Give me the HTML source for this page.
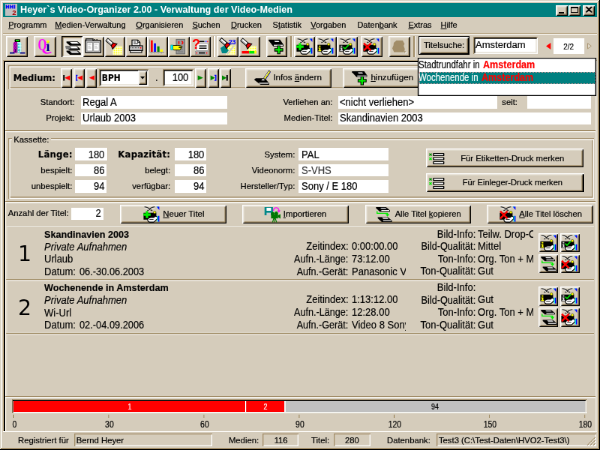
<!DOCTYPE html>
<html><head><meta charset="utf-8"><title>Heyer`s Video-Organizer 2.00</title>
<style>
html,body{margin:0;padding:0;background:#D5CCBB;overflow:hidden;}
body{width:600px;height:450px;position:relative;font-family:"Liberation Sans",sans-serif;color:#000;}
#win{position:absolute;left:0;top:0;width:800px;height:600px;transform:scale(.75);transform-origin:0 0;overflow:hidden;will-change:transform;}
.a{position:absolute;box-sizing:border-box;}
.t{white-space:nowrap;height:0;line-height:0;}
.t span{display:inline-block;line-height:0;vertical-align:baseline;}
.f11{font-size:11.3px;}
.f13{font-size:14px;}
.mn{font-size:11px;}
.b{font-weight:bold;}
.i{font-style:italic;}
u{text-decoration:underline;}
.btn{background:#D5CCBB;box-shadow:inset 1.333px 1.333px 0 #fff,inset -1.333px -1.333px 0 #000,inset 2.667px 2.667px 0 #E4DED2,inset -2.667px -2.667px 0 #A28D68;}
.btnp{background:#E9E4DA;box-shadow:inset 1.333px 1.333px 0 #000,inset -1.333px -1.333px 0 #fff,inset 2.667px 2.667px 0 #A28D68,inset -2.667px -2.667px 0 #E4DED2;}
.sunk{background:#fff;box-shadow:inset 1.333px 1.333px 0 #A28D68,inset -1.333px -1.333px 0 #fff,inset 2.667px 2.667px 0 #000,inset -2.667px -2.667px 0 #E4DED2;}
.sunk1{box-shadow:inset 1.333px 1.333px 0 #A28D68,inset -1.333px -1.333px 0 #fff;}
.etch{box-shadow:inset 1.333px 1.333px 0 #A28D68,inset -1.333px -1.333px 0 #fff,inset 2.667px 2.667px 0 #fff,inset -2.667px -2.667px 0 #A28D68;}
.w{background:#fff;}
svg.ic{position:absolute;overflow:visible;}
.ttl{font-size:12.65px;font-weight:bold;color:#fff;}
.big{font-size:28px;}
.f10{font-size:10.5px;}
.f11,.mn,.f10{-webkit-text-stroke:.22px currentColor;}
.f13{-webkit-text-stroke:.18px currentColor;}

</style></head><body>
<svg width="0" height="0" style="position:absolute">
<defs>
<pattern id="ygrid" width="3" height="3" patternUnits="userSpaceOnUse"><rect width="3" height="3" fill="#fff"/><rect x=".5" y=".5" width="1.9" height="1.9" fill="#FF0"/></pattern>
<pattern id="hat1" width="2" height="2" patternUnits="userSpaceOnUse"><rect width="2" height="2" fill="#C0C"/><rect width="1" height="1" fill="#808"/><rect x="1" y="1" width="1" height="1" fill="#808"/></pattern>
<pattern id="hat2" width="2" height="2" patternUnits="userSpaceOnUse"><rect width="2" height="2" fill="#CFF"/><rect width="1" height="1" fill="#0CC"/></pattern>

<symbol id="t1" overflow="visible"><rect x="7.6" y="1.2" width="7.4" height="4" rx="1" fill="#000"/><rect x="9" y="2.2" width="4.6" height="1.8" fill="#0F0"/><path d="M5.8 19.4V7C5.8 5.6 6.6 5 8 5H11V19.4Z" fill="url(#hat1)"/><path d="M11 5H14C15.4 5 16.2 5.6 16.2 7V19.4H11Z" fill="url(#hat2)"/><path d="M11 6.5V19.4" stroke="#668" stroke-width="1.2"/><path d="M8.6 14V19" stroke="#406" stroke-width="1.2"/><path d="M13.6 14V19" stroke="#9aa" stroke-width="1.2"/><path d="M1 19.6H7.4M14.8 19.6H21.4" stroke="#008" stroke-width="1.6" fill="none"/></symbol>


<symbol id="cas" overflow="visible"><path d="M0 0H15L19.2 3.6V5.4H4.6L0 1.6Z" fill="#000"/><path d="M4.6 .7H14.4L16.8 3H7.2Z" fill="#fff"/></symbol>
<symbol id="t3" overflow="visible"><use href="#cas" x="1.6" y="4.3"/><use href="#cas" x=".6" y="10.4"/><use href="#cas" x="1.6" y="16.5"/><path d="M0 10.6H6L8 12.5L6 14.6H1Z" fill="#777"/></symbol>

<symbol id="t4" overflow="visible"><rect x="-.2" y="3.2" width="20.6" height="15.8" fill="#D4D4D4" stroke="#000" stroke-width="1.3"/><path d="M.6 3V.9H10V3" fill="#ddd" stroke="#000" stroke-width="1.2"/><path d="M11.5 1.6h1.5M14.5 1.6h1.5" stroke="#000" stroke-width="1"/><rect x="2" y="5.4" width="7.4" height="11.6" fill="#fff" stroke="#777" stroke-width=".7"/><rect x="10.8" y="5.4" width="7.4" height="11.6" fill="#fff" stroke="#777" stroke-width=".7"/><path d="M3.5 8h4M3.5 10.5h3M3.5 13h4M12.3 8h4M12.3 10.5h3M12.3 13h4" stroke="#aaa" stroke-width=".9"/></symbol>

<symbol id="flash" overflow="visible"><g transform="translate(1.2,2.4) rotate(41)"><rect x="-1" y="-2.2" width="9.5" height="4.4" fill="#fff" stroke="#000" stroke-width="1"/><path d="M-1 1H8.5" stroke="#999" stroke-width="1.2"/><path d="M8.5 -2.2L13 -4.4V4.4L8.5 2.2Z" fill="#E00" stroke="#000" stroke-width="1"/></g></symbol>
<symbol id="t5" overflow="visible"><rect x="8.5" y="10.6" width="12.6" height="11.5" fill="url(#ygrid)"/><path d="M8.5 22.1V16L14 10.6H8.5Z" fill="#D5CCBB"/><use href="#flash"/></symbol>

<symbol id="t6" overflow="visible"><path d="M5 10V2.4H12.5L15.6 5.5V10Z" fill="#fff" stroke="#000" stroke-width="1.2"/><path d="M12.3 2.6V5.7H15.4M7 5h3M7 7.3h6" stroke="#000" stroke-width=".9" fill="none"/><rect x="1.5" y="10" width="17.6" height="6.4" fill="#C8C8C8" stroke="#000" stroke-width="1.2"/><path d="M3 12.7H15" stroke="#555" stroke-width="1.2" stroke-dasharray="1 1"/><rect x="15.6" y="12" width="1.8" height="1.6" fill="#F00"/><rect x="2.6" y="16.4" width="15.4" height="2.6" fill="#eee" stroke="#000" stroke-width="1.1"/></symbol>

<symbol id="t7" overflow="visible"><path d="M.6 1.5V18.6H20" stroke="#888" stroke-width="1" fill="none"/><path d="M3 19.4v1M7.5 19.4v1M12 19.4v1M16.3 19.4v1" stroke="#888" stroke-width="1"/><rect x="2" y="2.8" width="2.7" height="15.2" fill="#F00"/><rect x="6.2" y="6.8" width="2.7" height="11.2" fill="#00F"/><rect x="10.6" y="10.8" width="3" height="7.2" fill="#080"/><rect x="14.6" y="14.8" width="3.3" height="3.2" fill="#FF0"/></symbol>

<symbol id="t8" overflow="visible"><rect x="7" y="1.4" width="11.4" height="19.4" fill="#999" stroke="#666" stroke-width="1"/><path d="M10.5 4V7.8M14 4.2C16.3 4 16.3 7.8 14 7.6" stroke="#F00" stroke-width="1.5" fill="none"/><path d="M9 15h7M9 18h7" stroke="#777" stroke-width="1"/><path d="M2.5 9.5H8C10 9 15 10.3 15 11.3C15 12.3 12 12 10.5 12.2H14C14.5 13.2 13.5 14 12.5 14C13 15 12 15.8 11 15.7H4L2.5 15Z" fill="#FF0" stroke="#000" stroke-width=".9"/><rect x="-.2" y="9" width="2.7" height="6.6" fill="#0FF" stroke="#088" stroke-width=".6"/></symbol>



<symbol id="t11" overflow="visible"><rect x="9" y="10.4" width="12" height="7" fill="url(#ygrid)"/><path d="M9 17.4V14L12.5 10.4H9Z" fill="#D5CCBB"/><rect x="1.5" y="17" width="9.8" height="3.4" fill="#F00"/><rect x="11.3" y="17" width="7" height="3.4" fill="#0E0"/><rect x="18.3" y="17" width="2.7" height="3.4" fill="#FF0"/><use href="#flash" x=".8"/></symbol>

<symbol id="plus" overflow="visible"><path d="M-1.7 -5.4H1.7V-1.7H5.4V1.7H1.7V5.4H-1.7V1.7H-5.4V-1.7H-1.7Z" fill="#0E0" stroke="#000" stroke-width="1.1"/></symbol>
<symbol id="t12" overflow="visible"><path d="M.3 1.7H15.3L20 8.4V11H6.5L.3 3.3Z" fill="#000"/><path d="M7.6 3.4H13.4L14.5 5H8.8Z" fill="#fff"/><path d="M7 9.3H19" stroke="#fff" stroke-width="1.3"/><use href="#plus" x="13.7" y="15.4"/></symbol>
<symbol id="casplus" overflow="visible"><path d="M-.7 2H15.6L19.4 7.6V9.8H5.3L-.7 3.2Z" fill="#000"/><path d="M7.2 3.4H13L14 4.9H8.2Z" fill="#fff"/><path d="M6.3 8.3H18.8" stroke="#fff" stroke-width="1.2"/><use href="#plus" x="12.8" y="14.6"/></symbol>

<symbol id="hbase" overflow="visible"><path d="M.6 .9C4 .9 6 2.4 7.6 4C9.4 2 11.6 .9 14.4 .9M4.4 5.8C5.8 5.2 6.8 4.6 7.6 4C8.8 4.6 9.8 5.4 11.2 5.8" stroke="#222" stroke-width="1.4" fill="none"/><path d="M.6 2.1C3.6 2.1 5.6 3.4 7 4.8M8.4 4.6C10 3 12 2.1 14.4 2.1" stroke="#fff" stroke-width=".9" fill="none"/><path d="M16.6 .6H20.4V5Z" fill="#00F"/><path d="M16.6 .6H18.4V1.9Z" fill="#0FF"/><rect x="-.6" y="8.7" width="17" height="9.1" fill="#000"/><circle cx="14.2" cy="8.1" r="1.7" fill="#FF0" stroke="#330" stroke-width=".6"/><path d="M4.8 17.8C5.5 15.6 8 14.7 10.5 14.9H13.2C14.4 13.4 16.4 13.2 17.6 13.9V17.4C16 17.8 15 20 13 21.1H7.5C5.6 20.9 4.9 19.6 4.8 17.8Z" fill="#fff" stroke="#000" stroke-width="1.1"/><path d="M7.2 17.6H12.6" stroke="#000" stroke-width=".9"/><rect x="17.6" y="12.8" width="1.3" height="7.8" fill="#0FF"/><rect x="18.9" y="12.8" width="1.5" height="7.8" fill="#00F"/></symbol>
<symbol id="hplus" overflow="visible"><use href="#hbase"/><path d="M2.4 6.6H5.6V9.6H8.8V12.8H5.6V15.8H2.4V12.8H-.8V9.6H2.4Z" fill="#0E0"/></symbol>
<symbol id="hi" overflow="visible"><use href="#hbase"/><path d="M1.2 9.8H3.4V11.4H1.2ZM.5 12.4H3.4V16H4.3V17.2H.5V16H1.4V13.6H.5Z" fill="#FF0"/></symbol>
<symbol id="hchk" overflow="visible"><use href="#hbase"/><path d="M1.2 9.8H3.4V11.4H1.2ZM.5 12.4H3.4V16H4.3V17.2H.5V16H1.4V13.6H.5Z" fill="#ddd"/><path d="M4.6 11.6L7 14L12 8.6" stroke="#0D0" stroke-width="1.7" fill="none"/></symbol>
<symbol id="hx" overflow="visible"><use href="#hbase"/><path d="M0 6.6L9.6 16.4M9.6 6.6L0 16.4" stroke="#F00" stroke-width="2.4"/></symbol>
<symbol id="t13" overflow="visible"><use href="#hplus"/></symbol>
<symbol id="t14" overflow="visible"><use href="#hi"/></symbol>
<symbol id="t15" overflow="visible"><use href="#hchk"/></symbol>
<symbol id="t16" overflow="visible"><use href="#hx"/></symbol>
<symbol id="t17" overflow="visible"><path d="M18 17L20.6 18.6L18 20.4Z" fill="#fff"/><path d="M6.5 3H15L17.4 7.4L16.2 10L17.8 14.6L16.4 18.4H3.4L1 13.4L2.6 9.4L3 6Z" fill="#A28D68"/><path d="M17.2 16.4L19.8 18L17.2 19.6Z" fill="#A28D68"/></symbol>

<symbol id="n1" overflow="visible"><rect x="1.2" y="2" width="2" height="7.6" fill="#000"/><path d="M10.2 2.4V9.2L3.2 5.8Z" fill="#F00"/></symbol>
<symbol id="n2" overflow="visible"><path d="M3.4 2.5H1.8V9.1H3.4" stroke="#00F" stroke-width="1.4" fill="none"/><path d="M10 2.4V9.2L3.2 5.8Z" fill="#F00"/></symbol>
<symbol id="n3" overflow="visible"><path d="M8.8 2.6V9L1.8 5.8Z" fill="#F00"/></symbol>
<symbol id="n4" overflow="visible"><path d="M1.6 2.6V9L8.8 5.8Z" fill="#080"/></symbol>
<symbol id="n5" overflow="visible"><path d="M7 2.5H8.8V9.1H7" stroke="#00F" stroke-width="1.4" fill="none"/><path d="M1.6 2.4V9.2L7.6 5.8Z" fill="#080"/></symbol>
<symbol id="n6" overflow="visible"><rect x="6.8" y="2" width="2" height="7.6" fill="#000"/><path d="M1 2.4V9.2L7 5.8Z" fill="#080"/></symbol>

<symbol id="pen" overflow="visible"><path d="M-.2 13.2L2 11.2H14L20 18V20H8.5Z" fill="#000"/><path d="M6.5 18H19.3" stroke="#fff" stroke-width="1.3"/><path d="M9.4 14.4C9.6 12.6 11 11.6 12.2 11.4L14.4 13.4C14 14.6 11.6 15.4 9.4 14.4Z" fill="#ccc" stroke="#000" stroke-width=".7"/><path d="M12 11.6L19.6 .6L21.8 2.4L14.4 13.4Z" fill="#000"/><path d="M13.2 11.4L19.8 1.8" stroke="#fff" stroke-width="1"/><path d="M14 12L20.6 2.4" stroke="#FF0" stroke-width="1.5"/><path d="M15 12.8L21.4 3.4" stroke="#00A" stroke-width=".9"/></symbol>

<symbol id="lst" overflow="visible"><path d="M.4 .6L3.6 3.6M3.6 .6L.4 3.6" stroke="#080" stroke-width="1.3"/><path d="M.4 6.2L3.6 9.2M3.6 6.2L.4 9.2" stroke="#0E0" stroke-width="1.3"/><rect x="5.2" y="0.1" width="15.2" height="4" rx=".9" fill="#000"/><rect x="6.6" y="1.25" width="12.4" height="1.7" fill="#fff"/><rect x="5.2" y="5.5" width="15.2" height="4" rx=".9" fill="#000"/><rect x="6.6" y="6.65" width="12.4" height="1.7" fill="#fff"/><rect x="5.2" y="10.9" width="15.2" height="4" rx=".9" fill="#000"/><rect x="6.6" y="12.05" width="12.4" height="1.7" fill="#fff"/></symbol>

<symbol id="imp" overflow="visible"><rect x="-.3" y="1" width="11.2" height="11" fill="#088"/><rect x="2.4" y="2" width="6" height="4" fill="#fff"/><rect x="2.4" y="8.6" width="5.6" height="3.4" fill="#ccc"/><path d="M11.5 6C12 .5 18.5 .5 19 6" stroke="#F0F" stroke-width="1.2" fill="none"/><path d="M16.6 5.4H21L18.8 8.4Z" fill="#F0F"/><circle cx="10.6" cy="9.6" r="2.2" fill="#070"/><circle cx="15.4" cy="9.4" r="2.4" fill="#070"/><rect x="8.4" y="10.6" width="9.4" height="5.6" fill="#070"/><path d="M17.8 12L21 10.4V16.4L17.8 14.8Z" fill="#070"/><path d="M12 16L10.4 21.4M13 16V21.4M14 16L15.8 21.4" stroke="#070" stroke-width="1.1"/></symbol>

<symbol id="copy" overflow="visible"><path d="M.3 1H13.6L19 5.4V7.2H5.4L.3 2.6Z" fill="#000"/><path d="M6 1.9H13L14.6 3.3H7.6Z" fill="#fff"/><path d="M7.4 5.6H18" stroke="#fff" stroke-width="1.2"/><path d="M2.6 14.4H16L21.6 19V21H8L2.6 16Z" fill="#000"/><path d="M8.4 15.3H15.4L17 16.7H10Z" fill="#fff"/><path d="M9.8 19.2H20.6" stroke="#fff" stroke-width="1.2"/><path d="M1.8 6.4V9.4H15.6V11" stroke="#0E0" stroke-width="1.3" fill="none"/><path d="M12.8 10.6H18.4L15.6 13.8Z" fill="#0E0"/></symbol>
</defs>
</svg>

<svg id="ln" width="600" height="450" viewBox="0 0 600 450" style="position:absolute;left:0;top:0"><rect x="0" y="0" width="600" height="1" fill="#DCD5C6"/>
<rect x="0" y="0" width="1" height="450" fill="#DCD5C6"/>
<rect x="1" y="1" width="598" height="1" fill="#F6F3EC"/>
<rect x="1" y="1" width="1" height="448" fill="#F6F3EC"/>
<rect x="598" y="1" width="1" height="448" fill="#A28D68"/>
<rect x="1" y="448" width="598" height="1" fill="#A28D68"/>
<rect x="599" y="0" width="1" height="450" fill="#000"/>
<rect x="0" y="449" width="600" height="1" fill="#000"/>
<rect x="3" y="3" width="594" height="14" fill="#008080"/>
<rect x="3" y="33" width="594" height="1" fill="#BBAA8B"/>
<rect x="3" y="34" width="594" height="1" fill="#F0ECE3"/>
<rect x="3" y="60" width="594" height="1" fill="#B29F7C"/>
<rect x="3" y="60" width="1" height="371" fill="#B29F7C"/>
<rect x="4" y="61" width="592" height="1" fill="#000"/>
<rect x="4" y="61" width="1" height="370" fill="#000"/>
<rect x="3" y="431" width="594" height="1" fill="#FAF8F4"/>
<rect x="595.5" y="61" width="1.0" height="371" fill="#F2EEE6"/>
<rect x="5.2" y="62.2" width="1.0" height="368.8" fill="#F8F2E6"/>
<rect x="6" y="62.4" width="589.5" height="1.0" fill="#FBFAF7"/>
<rect x="5.2" y="130" width="590.3" height="1" fill="#A28D68"/>
<rect x="5.2" y="131.2" width="590.3" height="1.0" fill="#FBFaF7"/>
<rect x="5.2" y="201" width="590.3" height="1" fill="#A28D68"/>
<rect x="5.2" y="202.2" width="590.3" height="1.0" fill="#FBFaF7"/>
<rect x="5.2" y="396" width="590.3" height="1" fill="#A28D68"/>
<rect x="5.2" y="397.2" width="590.3" height="1.0" fill="#FBFaF7"/>
<rect x="6.4" y="226" width="587.6" height="1" fill="#E5E0D5"/>
<rect x="6.4" y="226" width="0.9" height="170" fill="#E5E0D5"/>
<rect x="6.2" y="279" width="587.8" height="1" fill="#A89672"/>
<rect x="6.2" y="280.2" width="587.8" height="1.0" fill="#E9E4DB"/>
<rect x="6.2" y="333" width="587.8" height="1" fill="#A89672"/>
<rect x="6.2" y="334.2" width="587.8" height="1.0" fill="#E3DDD1"/>
<rect x="6.2" y="331.9" width="587.8" height="0.9" fill="#DDD6C8"/>
<rect x="12" y="399.2" width="575" height="1.0" fill="#A28D68"/>
<rect x="12" y="399.2" width="1" height="13.8" fill="#A28D68"/>
<rect x="12.9" y="400.1" width="573.1" height="0.9" fill="#000"/>
<rect x="12.8" y="400.1" width="0.8" height="12.3" fill="#000"/>
<rect x="13.5" y="412" width="573.5" height="1.2" fill="#F4F4F0"/>
<rect x="585.4" y="400.6" width="1.2" height="12.6" fill="#EEECE6"/>
<rect x="13.5" y="401" width="571.7" height="11" fill="#C0C0C0"/>
<rect x="13.5" y="401" width="231.5" height="11" fill="#F00"/>
<rect x="245" y="401" width="1.2" height="11" fill="#fff"/>
<rect x="246.2" y="401" width="38.2" height="11" fill="#F00"/>
<rect x="284.4" y="401" width="1.3" height="11" fill="#fff"/>
<rect x="13.0" y="414.7" width="1.0" height="3.3" fill="#A89672"/>
<rect x="108.2" y="414.7" width="1.0" height="3.3" fill="#A89672"/>
<rect x="203.4" y="414.7" width="1.0" height="3.3" fill="#A89672"/>
<rect x="298.6" y="414.7" width="1.0" height="3.3" fill="#A89672"/>
<rect x="393.8" y="414.7" width="1.0" height="3.3" fill="#A89672"/>
<rect x="489.0" y="414.7" width="1.0" height="3.3" fill="#A89672"/>
<rect x="584.2" y="414.7" width="1.0" height="3.3" fill="#A89672"/></svg>
<div id="win">
<svg class="ic" style="left:6.5px;top:5px" width="16" height="16" viewBox="0 0 16 16"><rect width="16" height="16" fill="#C0C0C0"/><path d="M1.5 1.5v5M4.5 1.5v5M1.5 4h3M7 1.5v5M10 1.5v5M7 4h3M12.5 1.5v5" stroke="#00F" stroke-width="1.5"/><text x="9.2" y="15.2" font-size="9.5" font-weight="bold" fill="#A00" font-family="Liberation Sans, sans-serif">2</text></svg>
<div class="a t ttl" style="left:26.67px;top:12.96px;font-size:13.4px;"><span style="transform:scaleX(0.945);transform-origin:0 0">Heyer`s Video-Organizer 2.00 - Verwaltung der Video-Medien</span></div>
<div class="a btn" style="left:741.2px;top:6.53px;width:16.0px;height:14.0px;"></div>
<div class="a btn" style="left:758.13px;top:6.53px;width:16.0px;height:14.0px;"></div>
<div class="a btn" style="left:777.33px;top:6.53px;width:16.0px;height:14.0px;"></div>
<div class="a " style="left:745.2px;top:16.0px;width:6.8px;height:2.0px;background:#000;"></div>
<div class="a " style="left:761.33px;top:8.53px;width:9.2px;height:8.8px;border:1px solid #000;border-top-width:2px;"></div>
<svg class="ic" style="left:780.93px;top:9.33px" width="8.53" height="7.47" viewBox="0 0 8 7"><path d="M0 0L7 7M1 0L8 7M7 0L0 7M8 0L1 7" stroke="#000" stroke-width="1.1" fill="none"/></svg>
<div class="a t mn" style="left:11.2px;top:32.99px;"><span><u>P</u>rogramm</span></div>
<div class="a t mn" style="left:73.33px;top:32.99px;"><span><u>M</u>edien-Verwaltung</span></div>
<div class="a t mn" style="left:181.33px;top:32.99px;"><span><u>O</u>rganisieren</span></div>
<div class="a t mn" style="left:256.4px;top:32.99px;"><span><u>S</u>uchen</span></div>
<div class="a t mn" style="left:308.0px;top:32.99px;"><span><u>D</u>rucken</span></div>
<div class="a t mn" style="left:363.6px;top:32.99px;"><span>S<u>t</u>atistik</span></div>
<div class="a t mn" style="left:414.27px;top:32.99px;"><span><u>V</u>orgaben</span></div>
<div class="a t mn" style="left:476.4px;top:32.99px;"><span>Daten<u>b</u>ank</span></div>
<div class="a t mn" style="left:544.4px;top:32.99px;"><span><u>E</u>xtras</span></div>
<div class="a t mn" style="left:587.6px;top:32.99px;"><span><u>H</u>ilfe</span></div>
<div class="a btn" style="left:8.0px;top:48.0px;width:29.33px;height:28.0px;"></div>
<svg class="ic" style="left:11.6px;top:50.53px" width="21.33" height="21.33" viewBox="0 0 21.33 21.33"><use href="#t1"/></svg>
<div class="a btn" style="left:45.33px;top:48.0px;width:29.33px;height:28.0px;"></div>
<svg class="ic" style="left:48.93px;top:50.53px" width="21.33" height="21.33" viewBox="0 0 21.33 21.33"><text transform="translate(1.4,16.4) scale(.66,1)" font-family="Liberation Serif, serif" font-weight="bold" font-size="23" fill="#F0F">Q</text><text transform="translate(12.4,16.6) scale(.95,1)" font-family="Liberation Serif, serif" font-weight="bold" font-size="19" fill="#008">i</text><circle cx="15" cy="4.6" r="1.8" fill="#FF0"/><path d="M8 17C11 21 15 20.6 19.4 18.6" stroke="#F0F" stroke-width="1.6" fill="none"/></svg>
<div class="a btnp" style="left:82.0px;top:48.0px;width:28.13px;height:28.0px;"></div>
<svg class="ic" style="left:86.53px;top:51.47px" width="21.33" height="21.33" viewBox="0 0 21.33 21.33"><use href="#t3"/></svg>
<div class="a btn" style="left:110.27px;top:48.0px;width:28.4px;height:28.0px;"></div>
<svg class="ic" style="left:113.87px;top:50.53px" width="21.33" height="21.33" viewBox="0 0 21.33 21.33"><use href="#t4"/></svg>
<div class="a btn" style="left:138.8px;top:48.0px;width:28.4px;height:28.0px;"></div>
<svg class="ic" style="left:142.4px;top:50.53px" width="21.33" height="21.33" viewBox="0 0 21.33 21.33"><use href="#t5"/></svg>
<div class="a btn" style="left:167.33px;top:48.0px;width:28.4px;height:28.0px;"></div>
<svg class="ic" style="left:170.93px;top:50.53px" width="21.33" height="21.33" viewBox="0 0 21.33 21.33"><use href="#t6"/></svg>
<div class="a btn" style="left:195.87px;top:48.0px;width:28.4px;height:28.0px;"></div>
<svg class="ic" style="left:199.47px;top:50.53px" width="21.33" height="21.33" viewBox="0 0 21.33 21.33"><use href="#t7"/></svg>
<div class="a btn" style="left:224.4px;top:48.0px;width:28.4px;height:28.0px;"></div>
<svg class="ic" style="left:228.0px;top:50.53px" width="21.33" height="21.33" viewBox="0 0 21.33 21.33"><use href="#t8"/></svg>
<div class="a btn" style="left:252.93px;top:48.0px;width:28.4px;height:28.0px;"></div>
<svg class="ic" style="left:256.53px;top:50.53px" width="21.33" height="21.33" viewBox="0 0 21.33 21.33"><rect x="3.5" y="2.5" width="17.3" height="19" fill="#ddd"/><path d="M9 4.3H15.5" stroke="#000" stroke-width="1.6"/><path d="M17 4.3h1.4" stroke="#00F" stroke-width="1.7"/><path d="M19.2 4.3h1.3" stroke="#F00" stroke-width="1.7"/><rect x="5" y="7" width="15.4" height="9.4" fill="#fff" stroke="#888" stroke-width=".8"/><path d="M8.5 10.2H18.5M8.5 13.2H18.5" stroke="#000" stroke-width="1.5"/><rect x="3.5" y="17.6" width="17.3" height="3.9" fill="#BBB" stroke="#888" stroke-width=".6"/><path d="M8 19.6H16.5" stroke="#000" stroke-width="1.6"/><path d="M4.7 19.6h1.4M18 19.6h1.4" stroke="#F00" stroke-width="1.6"/><text x="-1" y="14" font-family="Liberation Sans, sans-serif" font-weight="bold" font-size="18" fill="#F00">?</text></svg>
<div class="a btn" style="left:289.2px;top:48.0px;width:28.4px;height:28.0px;"></div>
<svg class="ic" style="left:292.8px;top:50.53px" width="21.33" height="21.33" viewBox="0 0 21.33 21.33"><rect x="8.5" y="9.5" width="12.6" height="12.5" fill="url(#ygrid)"/><path d="M1 13L6 9.5L12 16L9 20H3Z" fill="#088"/><path d="M10 21L19 10" stroke="#ccc" stroke-width="2"/><use href="#flash" x=".6" y="-.4"/><text x="11.5" y="8.2" font-family="Liberation Sans, sans-serif" font-weight="bold" font-size="9.5" fill="#00F" letter-spacing="-.6">23</text></svg>
<div class="a btn" style="left:317.73px;top:48.0px;width:28.93px;height:28.0px;"></div>
<svg class="ic" style="left:321.33px;top:50.53px" width="21.33" height="21.33" viewBox="0 0 21.33 21.33"><use href="#t11"/></svg>
<div class="a btn" style="left:354.67px;top:48.0px;width:28.67px;height:28.0px;"></div>
<svg class="ic" style="left:358.27px;top:50.53px" width="21.33" height="21.33" viewBox="0 0 21.33 21.33"><use href="#t12"/></svg>
<div class="a btn" style="left:392.0px;top:48.0px;width:28.4px;height:28.0px;"></div>
<svg class="ic" style="left:395.6px;top:50.53px" width="21.33" height="21.33" viewBox="0 0 21.33 21.33"><use href="#t13"/></svg>
<div class="a btn" style="left:420.53px;top:48.0px;width:28.4px;height:28.0px;"></div>
<svg class="ic" style="left:424.13px;top:50.53px" width="21.33" height="21.33" viewBox="0 0 21.33 21.33"><use href="#t14"/></svg>
<div class="a btn" style="left:449.07px;top:48.0px;width:28.27px;height:28.0px;"></div>
<svg class="ic" style="left:452.67px;top:50.53px" width="21.33" height="21.33" viewBox="0 0 21.33 21.33"><use href="#t15"/></svg>
<div class="a btn" style="left:481.33px;top:48.0px;width:28.53px;height:28.0px;"></div>
<svg class="ic" style="left:484.93px;top:50.53px" width="21.33" height="21.33" viewBox="0 0 21.33 21.33"><use href="#t16"/></svg>
<div class="a btn" style="left:518.0px;top:48.0px;width:28.67px;height:28.0px;"></div>
<svg class="ic" style="left:521.6px;top:50.53px" width="21.33" height="21.33" viewBox="0 0 21.33 21.33"><use href="#t17"/></svg>
<div class="a " style="left:284.0px;top:48.0px;width:1.33px;height:28.0px;background:#A28D68;"></div>
<div class="a " style="left:285.33px;top:48.0px;width:1.33px;height:28.0px;background:#fff;"></div>
<div class="a " style="left:387.33px;top:48.0px;width:1.33px;height:28.0px;background:#A28D68;"></div>
<div class="a " style="left:388.67px;top:48.0px;width:1.33px;height:28.0px;background:#fff;"></div>
<div class="a " style="left:551.33px;top:48.0px;width:1.33px;height:28.0px;background:#A28D68;"></div>
<div class="a " style="left:552.67px;top:48.0px;width:1.33px;height:28.0px;background:#fff;"></div>
<div class="a " style="left:557.73px;top:48.0px;width:68.67px;height:25.07px;background:#000;"></div>
<div class="a btn" style="left:558.73px;top:49.0px;width:66.67px;height:23.07px;"></div>
<div class="a t f11" style="left:458.67px;width:266.67px;text-align:center;top:60.08px;"><span>Titelsuche:</span></div>
<div class="a sunk" style="left:631.07px;top:48.8px;width:86.27px;height:23.2px;"></div>
<div class="a t f13" style="left:634.13px;top:60.25px;font-size:13.5px;"><span style="transform:scaleX(0.965);transform-origin:0 0">Amsterdam</span></div>
<svg class="ic" style="left:728.0px;top:57.33px" width="6.4" height="9.07" viewBox="0 0 5 7"><path d="M5 0V7L0 3.5Z" fill="#F00"/></svg>
<div class="a w" style="left:738.27px;top:50.67px;width:40.67px;height:21.07px;"></div>
<div class="a t f11" style="left:624.8px;width:266.67px;text-align:center;top:62.38px;font-size:11.6px;"><span style="transform:scaleX(0.85);transform-origin:50% 0">2/2</span></div>
<svg class="ic" style="left:782.93px;top:57.33px" width="5.87" height="8.8" viewBox="0 0 5 7"><path d="M0.5 0.5V6.5L4.5 3.5Z" fill="#E6E0D4" stroke="#A28D68" stroke-width=".8"/></svg>
<div class="a etch" style="left:10.67px;top:86.67px;width:780.0px;height:32.0px;"></div>
<div class="a t f13 b" style="left:17.73px;top:104.36px;font-size:12.8px;font-family:DejaVu Sans Condensed,DejaVu Sans,Liberation Sans,sans-serif;"><span style="transform:scaleX(1);transform-origin:0 0">Medium:</span></div>
<div class="a btn" style="left:81.07px;top:90.93px;width:14.93px;height:25.87px;"></div>
<svg class="ic" style="left:83.2px;top:98.0px" width="10.67" height="10.67" viewBox="0 0 10.67 10.67"><use href="#n1"/></svg>
<div class="a btn" style="left:97.73px;top:90.93px;width:14.93px;height:25.87px;"></div>
<svg class="ic" style="left:99.87px;top:98.0px" width="10.67" height="10.67" viewBox="0 0 10.67 10.67"><use href="#n2"/></svg>
<div class="a btn" style="left:114.4px;top:90.93px;width:14.93px;height:25.87px;"></div>
<svg class="ic" style="left:116.53px;top:98.0px" width="10.67" height="10.67" viewBox="0 0 10.67 10.67"><use href="#n3"/></svg>
<div class="a btn" style="left:260.0px;top:90.93px;width:14.93px;height:25.87px;"></div>
<svg class="ic" style="left:262.13px;top:98.0px" width="10.67" height="10.67" viewBox="0 0 10.67 10.67"><use href="#n4"/></svg>
<div class="a btn" style="left:276.67px;top:90.93px;width:14.93px;height:25.87px;"></div>
<svg class="ic" style="left:278.8px;top:98.0px" width="10.67" height="10.67" viewBox="0 0 10.67 10.67"><use href="#n5"/></svg>
<div class="a btn" style="left:293.2px;top:90.93px;width:14.93px;height:25.87px;"></div>
<svg class="ic" style="left:295.33px;top:98.0px" width="10.67" height="10.67" viewBox="0 0 10.67 10.67"><use href="#n6"/></svg>
<div class="a sunk" style="left:132.27px;top:92.27px;width:66.0px;height:22.27px;"></div>
<div class="a t f13 b" style="left:135.87px;top:103.64px;font-size:11.8px;font-family:DejaVu Sans Condensed,DejaVu Sans,Liberation Sans,sans-serif;"><span style="transform:scaleX(1);transform-origin:0 0">BPH</span></div>
<div class="a btn" style="left:184.27px;top:94.27px;width:12.13px;height:18.27px;"></div>
<svg class="ic" style="left:187.47px;top:101.87px" width="6.13" height="3.47" viewBox="0 0 7 4"><path d="M0 0H7L3.5 4Z" fill="#000"/></svg>
<div class="a t f13" style="left:207.07px;top:103.15px;"><span style="transform:scaleX(0.93);transform-origin:0 0">.</span></div>
<div class="a sunk" style="left:216.67px;top:92.27px;width:41.07px;height:22.27px;"></div>
<div class="a t f13" style="right:548.8px;top:103.15px;"><span style="transform:scaleX(0.93);transform-origin:100% 0">100</span></div>
<div class="a btn" style="left:326.67px;top:90.67px;width:115.6px;height:26.13px;"></div>
<svg class="ic" style="left:338.67px;top:92.67px" width="22.67" height="22.67" viewBox="0 0 22.67 22.67"><use href="#pen"/></svg>
<div class="a t f11" style="left:364.4px;top:103.45px;font-size:11.6px;"><span>Infos <u>ä</u>ndern</span></div>
<div class="a btn" style="left:456.67px;top:90.67px;width:119.33px;height:26.13px;"></div>
<svg class="ic" style="left:470.0px;top:93.33px" width="19.33" height="19.33" viewBox="0 0 19.33 19.33"><use href="#casplus"/></svg>
<div class="a t f11" style="left:494.4px;top:103.45px;font-size:11.6px;"><span><u>h</u>inzufügen</span></div>
<div class="a t f11" style="right:700.4px;top:135.68px;"><span>Standort:</span></div>
<div class="a w" style="left:107.73px;top:128.4px;width:195.2px;height:16.4px;"></div>
<div class="a t f13" style="left:110.13px;top:135.68px;"><span style="transform:scaleX(0.93);transform-origin:0 0">Regal A</span></div>
<div class="a t f11" style="right:700.4px;top:157.15px;"><span>Projekt:</span></div>
<div class="a w" style="left:107.73px;top:149.6px;width:195.2px;height:16.53px;"></div>
<div class="a t f13" style="left:110.13px;top:157.15px;"><span style="transform:scaleX(0.93);transform-origin:0 0">Urlaub 2003</span></div>
<div class="a t f11" style="right:356.67px;top:135.68px;"><span>Verliehen an:</span></div>
<div class="a w" style="left:450.67px;top:128.4px;width:212.0px;height:16.4px;"></div>
<div class="a t f13" style="left:453.33px;top:135.68px;"><span style="transform:scaleX(0.93);transform-origin:0 0">&lt;nicht verliehen&gt;</span></div>
<div class="a t f11" style="right:110.0px;top:135.68px;"><span>seit:</span></div>
<div class="a w" style="left:703.07px;top:128.4px;width:85.2px;height:16.4px;"></div>
<div class="a t f11" style="right:356.67px;top:157.15px;"><span>Medien-Titel:</span></div>
<div class="a w" style="left:450.67px;top:149.6px;width:337.6px;height:16.53px;"></div>
<div class="a t f13" style="left:453.33px;top:157.15px;"><span style="transform:scaleX(0.93);transform-origin:0 0">Skandinavien 2003</span></div>
<div class="a " style="left:557.33px;top:77.33px;width:237.33px;height:50.67px;background:#fff;box-shadow:inset 0 0 0 1.333px #000;"></div>
<div class="a t f13" style="left:558.27px;top:86.13px;font-size:15px;"><span style="transform:scaleX(0.765);transform-origin:0 0">Stadtrundfahr in</span></div>
<div class="a t f13 b" style="left:643.73px;top:86.13px;font-size:15px;color:#F00;"><span style="transform:scaleX(0.84);transform-origin:0 0">Amsterdam</span></div>
<div class="a " style="left:558.67px;top:96.4px;width:235.2px;height:15.6px;background:#008080;outline:1px dotted #D99;outline-offset:-1px;"></div>
<div class="a t f13" style="left:557.87px;top:103.2px;font-size:15px;color:#fff;"><span style="transform:scaleX(0.765);transform-origin:0 0">Wochenende in</span></div>
<div class="a t f13 b" style="left:641.6px;top:103.2px;font-size:15px;color:#F00;"><span style="transform:scaleX(0.84);transform-origin:0 0">Amsterdam</span></div>
<div class="a etch" style="left:10.67px;top:184.0px;width:780.93px;height:81.33px;"></div>
<div class="a " style="left:16px;top:180px;width:52px;height:15px;background:#D5CCBB;"></div>
<div class="a t f11" style="left:18.27px;top:186.21px;"><span>Kassette:</span></div>
<div class="a t f13 b" style="right:703.33px;top:205.99px;font-size:13.1px;font-family:DejaVu Sans Condensed,DejaVu Sans,Liberation Sans,sans-serif;letter-spacing:.15px;"><span style="transform:scaleX(1);transform-origin:100% 0">Länge:</span></div>
<div class="a t f13 b" style="right:572.93px;top:205.99px;font-size:13.1px;font-family:DejaVu Sans Condensed,DejaVu Sans,Liberation Sans,sans-serif;letter-spacing:.15px;"><span style="transform:scaleX(1);transform-origin:100% 0">Kapazität:</span></div>
<div class="a w" style="left:100.0px;top:197.47px;width:42.27px;height:16.53px;"></div>
<div class="a t f13" style="right:660.93px;top:205.55px;"><span style="transform:scaleX(0.93);transform-origin:100% 0">180</span></div>
<div class="a w" style="left:232.93px;top:197.47px;width:42.13px;height:16.53px;"></div>
<div class="a t f13" style="right:527.6px;top:205.55px;"><span style="transform:scaleX(0.93);transform-origin:100% 0">180</span></div>
<div class="a t f11" style="right:406.67px;top:205.55px;"><span>System:</span></div>
<div class="a w" style="left:398.27px;top:197.47px;width:120.0px;height:16.53px;"></div>
<div class="a t f13" style="left:401.73px;top:205.55px;"><span style="transform:scaleX(0.93);transform-origin:0 0">PAL</span></div>
<div class="a t f11" style="right:703.6px;top:226.75px;"><span>bespielt:</span></div>
<div class="a t f11" style="right:572.93px;top:226.75px;"><span>belegt:</span></div>
<div class="a w" style="left:100.0px;top:218.8px;width:42.27px;height:16.53px;"></div>
<div class="a t f13" style="right:660.93px;top:226.75px;"><span style="transform:scaleX(0.93);transform-origin:100% 0">86</span></div>
<div class="a w" style="left:232.93px;top:218.8px;width:42.13px;height:16.53px;"></div>
<div class="a t f13" style="right:527.6px;top:226.75px;"><span style="transform:scaleX(0.93);transform-origin:100% 0">86</span></div>
<div class="a t f11" style="right:406.67px;top:226.75px;"><span>Videonorm:</span></div>
<div class="a w" style="left:398.27px;top:218.8px;width:120.0px;height:16.53px;"></div>
<div class="a t f13" style="left:401.73px;top:226.75px;color:#3a3a3a;"><span style="transform:scaleX(0.93);transform-origin:0 0">S-VHS</span></div>
<div class="a t f11" style="right:703.6px;top:248.08px;"><span>unbespielt:</span></div>
<div class="a t f11" style="right:572.93px;top:248.08px;"><span>verfügbar:</span></div>
<div class="a w" style="left:100.0px;top:240.13px;width:42.27px;height:16.53px;"></div>
<div class="a t f13" style="right:660.93px;top:248.08px;"><span style="transform:scaleX(0.93);transform-origin:100% 0">94</span></div>
<div class="a w" style="left:232.93px;top:240.13px;width:42.13px;height:16.53px;"></div>
<div class="a t f13" style="right:527.6px;top:248.08px;"><span style="transform:scaleX(0.93);transform-origin:100% 0">94</span></div>
<div class="a t f11" style="right:406.67px;top:248.08px;"><span>Hersteller/Typ:</span></div>
<div class="a w" style="left:398.27px;top:240.13px;width:120.0px;height:16.53px;"></div>
<div class="a t f13" style="left:401.73px;top:248.08px;"><span style="transform:scaleX(0.93);transform-origin:0 0">Sony / E 180</span></div>
<div class="a btn" style="left:567.73px;top:198.27px;width:210.0px;height:25.2px;"></div>
<svg class="ic" style="left:571.6px;top:203.87px" width="20.67" height="14.67" viewBox="0 0 20.67 14.67"><use href="#lst"/></svg>
<div class="a t f11" style="right:47.73px;top:210.75px;font-size:11.3px;"><span>Für Etiketten-Druck merken</span></div>
<div class="a btn" style="left:567.73px;top:230.93px;width:210.0px;height:25.2px;"></div>
<svg class="ic" style="left:571.6px;top:236.53px" width="20.67" height="14.67" viewBox="0 0 20.67 14.67"><use href="#lst"/></svg>
<div class="a t f11" style="right:50.0px;top:243.48px;font-size:11.1px;"><span>Für Einleger-Druck merken</span></div>
<div class="a t f11" style="left:10.67px;top:284.48px;"><span>Anzahl der Titel:</span></div>
<div class="a w" style="left:95.07px;top:276.67px;width:43.2px;height:16.4px;"></div>
<div class="a t f13" style="right:664.8px;top:284.22px;"><span style="transform:scaleX(0.93);transform-origin:100% 0">2</span></div>
<div class="a btn" style="left:160.0px;top:272.93px;width:142.27px;height:24.93px;"></div>
<svg class="ic" style="left:191.6px;top:274.93px" width="21.6" height="21.6" viewBox="0 0 21.6 21.6"><use href="#hplus"/></svg>
<div class="a t f11" style="left:217.33px;top:285.12px;font-size:11.4px;"><span><u>N</u>euer Titel</span></div>
<div class="a btn" style="left:322.67px;top:272.93px;width:142.27px;height:24.93px;"></div>
<svg class="ic" style="left:352.93px;top:274.93px" width="21.6" height="21.6" viewBox="0 0 21.6 21.6"><use href="#imp"/></svg>
<div class="a t f11" style="left:377.73px;top:285.12px;font-size:11.4px;"><span><u>I</u>mportieren</span></div>
<div class="a btn" style="left:486.67px;top:272.93px;width:141.07px;height:24.93px;"></div>
<svg class="ic" style="left:501.07px;top:274.93px" width="21.6" height="21.6" viewBox="0 0 21.6 21.6"><use href="#copy"/></svg>
<div class="a t f11" style="left:526.67px;top:285.21px;font-size:11.15px;"><span>Alle Titel <u>k</u>opieren</span></div>
<div class="a btn" style="left:649.33px;top:272.93px;width:141.73px;height:24.93px;"></div>
<svg class="ic" style="left:666.67px;top:274.93px" width="21.6" height="21.6" viewBox="0 0 21.6 21.6"><use href="#hx"/></svg>
<div class="a t f11" style="left:692.27px;top:285.21px;font-size:11.15px;"><span><u>A</u>lle Titel löschen</span></div>
<div class="a t big" style="left:-100.27px;width:266.67px;text-align:center;top:339.12px;font-size:28.3px;font-family:DejaVu Sans,Liberation Sans,sans-serif;"><span>1</span></div>
<div class="a t f13 b" style="left:58.93px;top:312.62px;font-size:13.6px;"><span style="transform:scaleX(0.93);transform-origin:0 0">Skandinavien 2003</span></div>
<div class="a t f13 i" style="left:59.47px;top:328.62px;"><span style="transform:scaleX(0.93);transform-origin:0 0">Private Aufnahmen</span></div>
<div class="a t f13" style="left:59.2px;top:345.28px;"><span style="transform:scaleX(0.93);transform-origin:0 0">Urlaub</span></div>
<div class="a t f13" style="left:58.93px;top:361.95px;"><span style="transform:scaleX(0.93);transform-origin:0 0">Datum:</span></div>
<div class="a t f13" style="left:106.4px;top:361.95px;"><span style="transform:scaleX(0.915);transform-origin:0 0">06.-30.06.2003</span></div>
<div class="a t f13" style="right:335.6px;top:327.95px;"><span style="transform:scaleX(0.93);transform-origin:100% 0">Zeitindex:</span></div>
<div class="a t f13" style="left:468.93px;top:327.95px;"><span style="transform:scaleX(0.93);transform-origin:0 0">0:00:00.00</span></div>
<div class="a t f13" style="right:335.6px;top:344.88px;"><span style="transform:scaleX(0.9);transform-origin:100% 0">Aufn.-Länge:</span></div>
<div class="a t f13" style="left:468.93px;top:344.75px;"><span style="transform:scaleX(0.93);transform-origin:0 0">73:12.00</span></div>
<div class="a t f13" style="right:335.6px;top:361.68px;"><span style="transform:scaleX(0.9);transform-origin:100% 0">Aufn.-Gerät:</span></div>
<div class="a " style="left:468.93px;top:354.67px;width:72.4px;height:17.33px;overflow:hidden;"><div class="a t f13" style="left:0;top:6.88px"><span style="transform:scaleX(.93);transform-origin:0 0">Panasonic VHS</span></div></div>
<div class="a t f13" style="right:165.6px;top:311.95px;"><span style="transform:scaleX(0.93);transform-origin:100% 0">Bild-Info:</span></div>
<div class="a t f13" style="right:165.6px;top:328.08px;"><span style="transform:scaleX(0.905);transform-origin:100% 0">Bild-Qualität:</span></div>
<div class="a t f13" style="left:637.33px;top:327.95px;"><span style="transform:scaleX(0.93);transform-origin:0 0">Mittel</span></div>
<div class="a t f13" style="right:165.6px;top:344.62px;"><span style="transform:scaleX(0.93);transform-origin:100% 0">Ton-Info:</span></div>
<div class="a t f13" style="right:165.6px;top:361.42px;"><span style="transform:scaleX(0.93);transform-origin:100% 0">Ton-Qualität:</span></div>
<div class="a t f13" style="left:637.33px;top:361.42px;"><span style="transform:scaleX(0.93);transform-origin:0 0">Gut</span></div>
<div class="a " style="left:637.33px;top:304.0px;width:73.87px;height:17.33px;overflow:hidden;"><div class="a t f13" style="left:0;top:7.95px"><span style="transform:scaleX(.93);transform-origin:0 0">Teilw. Drop-Outs</span></div></div>
<div class="a " style="left:637.33px;top:337.33px;width:73.87px;height:17.33px;overflow:hidden;"><div class="a t f13" style="left:0;top:7.28px"><span style="transform:scaleX(.93);transform-origin:0 0">Org. Ton + Musik</span></div></div>
<div class="a btn" style="left:718.27px;top:310.67px;width:25.87px;height:25.6px;"></div>
<svg class="ic" style="left:720.53px;top:312.8px" width="21.33" height="21.33" viewBox="0 0 21.33 21.33"><use href="#hi"/></svg>
<div class="a btn" style="left:747.07px;top:310.67px;width:25.87px;height:25.6px;"></div>
<svg class="ic" style="left:749.33px;top:312.8px" width="21.33" height="21.33" viewBox="0 0 21.33 21.33"><use href="#hchk"/></svg>
<div class="a btn" style="left:718.27px;top:338.8px;width:25.87px;height:25.6px;"></div>
<svg class="ic" style="left:720.53px;top:340.93px" width="21.33" height="21.33" viewBox="0 0 21.33 21.33"><use href="#copy"/></svg>
<div class="a btn" style="left:747.07px;top:338.8px;width:25.87px;height:25.6px;"></div>
<svg class="ic" style="left:749.33px;top:340.93px" width="21.33" height="21.33" viewBox="0 0 21.33 21.33"><use href="#hx"/></svg>
<div class="a t big" style="left:-100.27px;width:266.67px;text-align:center;top:410.59px;font-size:28.3px;font-family:DejaVu Sans,Liberation Sans,sans-serif;"><span>2</span></div>
<div class="a t f13 b" style="left:58.93px;top:384.09px;font-size:13.6px;"><span style="transform:scaleX(0.93);transform-origin:0 0">Wochenende in Amsterdam</span></div>
<div class="a t f13 i" style="left:59.47px;top:400.08px;"><span style="transform:scaleX(0.93);transform-origin:0 0">Private Aufnahmen</span></div>
<div class="a t f13" style="left:59.2px;top:416.75px;"><span style="transform:scaleX(0.93);transform-origin:0 0">Wi-Url</span></div>
<div class="a t f13" style="left:58.93px;top:433.42px;"><span style="transform:scaleX(0.93);transform-origin:0 0">Datum:</span></div>
<div class="a t f13" style="left:106.4px;top:433.42px;"><span style="transform:scaleX(0.915);transform-origin:0 0">02.-04.09.2006</span></div>
<div class="a t f13" style="right:335.6px;top:399.42px;"><span style="transform:scaleX(0.93);transform-origin:100% 0">Zeitindex:</span></div>
<div class="a t f13" style="left:468.93px;top:399.42px;"><span style="transform:scaleX(0.93);transform-origin:0 0">1:13:12.00</span></div>
<div class="a t f13" style="right:335.6px;top:416.35px;"><span style="transform:scaleX(0.9);transform-origin:100% 0">Aufn.-Länge:</span></div>
<div class="a t f13" style="left:468.93px;top:416.22px;"><span style="transform:scaleX(0.93);transform-origin:0 0">12:28.00</span></div>
<div class="a t f13" style="right:335.6px;top:433.15px;"><span style="transform:scaleX(0.9);transform-origin:100% 0">Aufn.-Gerät:</span></div>
<div class="a " style="left:468.93px;top:426.13px;width:72.4px;height:17.33px;overflow:hidden;"><div class="a t f13" style="left:0;top:6.88px"><span style="transform:scaleX(.93);transform-origin:0 0">Video 8 Sony</span></div></div>
<div class="a t f13" style="right:165.6px;top:383.42px;"><span style="transform:scaleX(0.93);transform-origin:100% 0">Bild-Info:</span></div>
<div class="a t f13" style="right:165.6px;top:399.55px;"><span style="transform:scaleX(0.905);transform-origin:100% 0">Bild-Qualität:</span></div>
<div class="a t f13" style="left:637.33px;top:399.42px;"><span style="transform:scaleX(0.93);transform-origin:0 0">Gut</span></div>
<div class="a t f13" style="right:165.6px;top:416.08px;"><span style="transform:scaleX(0.93);transform-origin:100% 0">Ton-Info:</span></div>
<div class="a t f13" style="right:165.6px;top:432.88px;"><span style="transform:scaleX(0.93);transform-origin:100% 0">Ton-Qualität:</span></div>
<div class="a t f13" style="left:637.33px;top:432.88px;"><span style="transform:scaleX(0.93);transform-origin:0 0">Gut</span></div>
<div class="a " style="left:637.33px;top:375.47px;width:73.87px;height:17.33px;overflow:hidden;"><div class="a t f13" style="left:0;top:7.95px"><span style="transform:scaleX(.93);transform-origin:0 0"></span></div></div>
<div class="a " style="left:637.33px;top:408.8px;width:73.87px;height:17.33px;overflow:hidden;"><div class="a t f13" style="left:0;top:7.28px"><span style="transform:scaleX(.93);transform-origin:0 0">Org. Ton + Musik</span></div></div>
<div class="a btn" style="left:718.27px;top:382.13px;width:25.87px;height:25.6px;"></div>
<svg class="ic" style="left:720.53px;top:384.27px" width="21.33" height="21.33" viewBox="0 0 21.33 21.33"><use href="#hi"/></svg>
<div class="a btn" style="left:747.07px;top:382.13px;width:25.87px;height:25.6px;"></div>
<svg class="ic" style="left:749.33px;top:384.27px" width="21.33" height="21.33" viewBox="0 0 21.33 21.33"><use href="#hchk"/></svg>
<div class="a btn" style="left:718.27px;top:410.27px;width:25.87px;height:25.6px;"></div>
<svg class="ic" style="left:720.53px;top:412.4px" width="21.33" height="21.33" viewBox="0 0 21.33 21.33"><use href="#copy"/></svg>
<div class="a btn" style="left:747.07px;top:410.27px;width:25.87px;height:25.6px;"></div>
<svg class="ic" style="left:749.33px;top:412.4px" width="21.33" height="21.33" viewBox="0 0 21.33 21.33"><use href="#hx"/></svg>
<div class="a t f10" style="left:39.33px;width:266.67px;text-align:center;top:542.46px;font-size:10.6px;color:#fff;"><span style="transform:scaleX(0.84);transform-origin:50% 0">1</span></div>
<div class="a t f10" style="left:220.67px;width:266.67px;text-align:center;top:542.46px;font-size:10.6px;color:#fff;"><span style="transform:scaleX(0.84);transform-origin:50% 0">2</span></div>
<div class="a t f10" style="left:447.07px;width:266.67px;text-align:center;top:542.46px;font-size:10.6px;"><span style="transform:scaleX(0.84);transform-origin:50% 0">94</span></div>
<div class="a t f10" style="left:-113.47px;width:266.67px;text-align:center;top:566.23px;font-size:12.4px;"><span style="transform:scaleX(0.84);transform-origin:50% 0">0</span></div>
<div class="a t f10" style="left:12.4px;width:266.67px;text-align:center;top:566.23px;font-size:12.4px;"><span style="transform:scaleX(0.84);transform-origin:50% 0">30</span></div>
<div class="a t f10" style="left:139.33px;width:266.67px;text-align:center;top:566.23px;font-size:12.4px;"><span style="transform:scaleX(0.84);transform-origin:50% 0">60</span></div>
<div class="a t f10" style="left:266.27px;width:266.67px;text-align:center;top:566.23px;font-size:12.4px;"><span style="transform:scaleX(0.84);transform-origin:50% 0">90</span></div>
<div class="a t f10" style="left:393.2px;width:266.67px;text-align:center;top:566.23px;font-size:12.4px;"><span style="transform:scaleX(0.84);transform-origin:50% 0">120</span></div>
<div class="a t f10" style="left:520.13px;width:266.67px;text-align:center;top:566.23px;font-size:12.4px;"><span style="transform:scaleX(0.84);transform-origin:50% 0">150</span></div>
<div class="a t f10" style="left:647.07px;width:266.67px;text-align:center;top:566.23px;font-size:12.4px;"><span style="transform:scaleX(0.84);transform-origin:50% 0">180</span></div>
<div class="a t f11" style="left:24.0px;top:587.01px;"><span>Registriert für</span></div>
<div class="a sunk1" style="left:99px;top:578px;width:184px;height:17px;"></div>
<div class="a t f11" style="left:101.73px;top:587.01px;"><span>Bernd Heyer</span></div>
<div class="a t f11" style="left:304.93px;top:587.01px;"><span>Medien:</span></div>
<div class="a sunk1" style="left:350px;top:578px;width:48px;height:17px;"></div>
<div class="a t f11" style="left:241.33px;width:266.67px;text-align:center;top:587.01px;"><span>116</span></div>
<div class="a t f11" style="left:415.07px;top:587.01px;"><span>Titel:</span></div>
<div class="a sunk1" style="left:444.5px;top:578px;width:49.0px;height:17px;"></div>
<div class="a t f11" style="left:336.0px;width:266.67px;text-align:center;top:587.01px;"><span>280</span></div>
<div class="a t f11" style="left:516.0px;top:587.01px;"><span>Datenbank:</span></div>
<div class="a sunk1" style="left:581.7px;top:578px;width:213.3px;height:17px;"></div>
<div class="a t f11" style="left:584.93px;top:587.01px;"><span>Test3 (C:\Test-Daten\HVO2-Test3\)</span></div>
<svg class="ic" style="left:782px;top:582px" width="13" height="13" viewBox="0 0 13 13"><path d="M12 1L1 12M12 5L5 12M12 9L9 12" stroke="#A28D68" stroke-width="1.2"/><path d="M13 1L1 13M13 5L5 13M13 9L9 13" stroke="#fff" stroke-width=".8"/></svg>
</div>
</body></html>
